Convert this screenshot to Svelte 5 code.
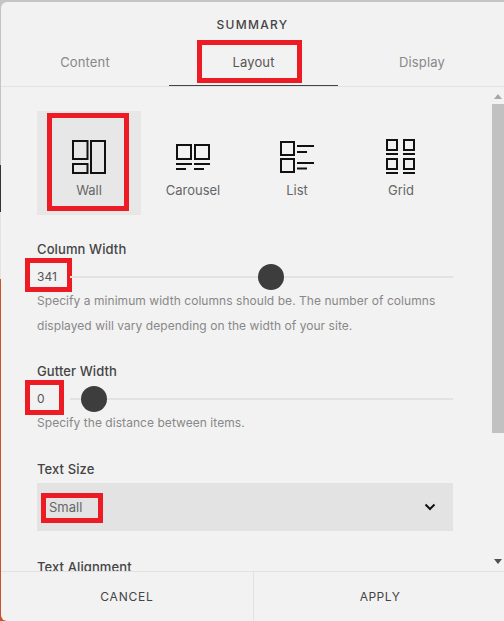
<script lang="ts">
    const tabs = ["Content", "Layout", "Display"];
    const layouts = ["Wall", "Carousel", "List", "Grid"];
</script>

<div class="page">
    <div class="modal">
        <header class="title">SUMMARY</header>

        <nav class="tabs">
            {#each tabs as tab}
                <div class="tab" class:active={tab === "Layout"}>
                    {#if tab === "Layout"}<span class="mark mark-tab"></span>{/if}
                    {tab}
                </div>
            {/each}
        </nav>

        <div class="body">
            <div class="scroll">
                <div class="layouts">
                    {#each layouts as item}
                        <div class="layout" class:selected={item === "Wall"}>
                            {#if item === "Wall"}<span class="mark mark-wall"></span>{/if}
                            <svg width="44" height="44" viewBox="0 0 44 44" fill="none" stroke="#111" stroke-width="2">
                                {#if item === "Wall"}
                                    <rect x="6" y="6" width="14.5" height="18" />
                                    <rect x="6" y="29" width="14.5" height="9" />
                                    <rect x="24" y="6" width="14" height="32" />
                                {:else if item === "Carousel"}
                                    <rect x="6" y="10" width="14" height="14" />
                                    <rect x="24" y="10" width="14" height="14" />
                                    <path d="M5 29h16M23 29h16M5 34h10M23 34h10" />
                                {:else if item === "List"}
                                    <rect x="6" y="7" width="13" height="13" />
                                    <rect x="6" y="24" width="13" height="13" />
                                    <path d="M22 11h17M22 17h10M22 28h17M22 33.500h10" />
                                {:else}
                                    <rect x="8" y="5" width="10" height="10" />
                                    <rect x="25" y="5" width="10" height="10" />
                                    <rect x="8" y="24" width="10" height="10" />
                                    <rect x="25" y="24" width="10" height="10" />
                                    <path d="M7 19h12M24 19h12M7 38h12M24 38h12" />
                                {/if}
                            </svg>
                            <span class="layout-name">{item}</span>
                        </div>
                    {/each}
                </div>

                <div class="field first">
                    <div class="label">Column Width</div>
                    <div class="slider">
                        <span class="mark mark-341"></span>
                        <span class="value">341</span>
                        <div class="track"><span class="thumb" style="left: 201px"></span></div>
                    </div>
                    <p class="desc">Specify a minimum width columns should be. The number of columns displayed will vary depending on the width of your site.</p>
                </div>

                <div class="field gutter">
                    <div class="label">Gutter Width</div>
                    <div class="slider">
                        <span class="mark mark-0"></span>
                        <span class="value">0</span>
                        <div class="track"><span class="thumb" style="left: 24px"></span></div>
                    </div>
                    <p class="desc">Specify the distance between items.</p>
                </div>

                <div class="field textsize">
                    <div class="label">Text Size</div>
                    <div class="select">
                        <span class="mark mark-small"></span>
                        <span>Small</span>
                        <svg width="12" height="8" viewBox="0 0 12 8" fill="none" stroke="#111" stroke-width="2"><path d="M1.500 1.500 6 6l4.500-4.500" /></svg>
                    </div>
                </div>

                <div class="field align">
                    <div class="label">Text Alignment</div>
                </div>
            </div>

            <div class="scrollbar">
                <span class="arrow up"></span>
                <span class="bar"></span>
                <span class="arrow down"></span>
            </div>
        </div>

        <footer class="footer">
            <button>CANCEL</button>
            <button>APPLY</button>
        </footer>
    </div>
</div>

<style>
    :global(body) {
        margin: 0;
    }

    .page {
        width: 504px;
        height: 621px;
        box-sizing: border-box;
        padding: 2px 0 0 1px;
        overflow: hidden;
        background: linear-gradient(to bottom, #c4c4c4 0, #c4c4c4 165px, #333 165px, #333 212px, #e4e4e4 212px, #e4e4e4 279px, #c9532a 279px);
        font-family: Inter, "Liberation Sans", sans-serif;
    }

    .modal {
        height: 100%;
        display: flex;
        flex-direction: column;
        background: #f2f2f2;
        border-radius: 6px 0 0 6px;
    }

    .title {
        height: 44px;
        padding-top: 15px;
        box-sizing: border-box;
        text-align: center;
        font-size: 12px;
        line-height: 16px;
        font-weight: 500;
        letter-spacing: 1.3px;
        color: #444;
    }

    .tabs {
        display: grid;
        grid-template-columns: 168px 169px 168px;
        height: 40px;
        border-bottom: 1px solid #e2e2e2;
    }

    .tab {
        position: relative;
        text-align: center;
        font-size: 13px;
        line-height: 32px;
        letter-spacing: 0.15px;
        color: #888;
    }

    .tab.active {
        color: #555;
        border-bottom: 1px solid #444;
    }

    .body {
        flex: 1;
        min-height: 0;
        display: flex;
    }

    .scroll {
        flex: 1;
        min-width: 0;
        overflow: hidden;
        padding: 24px 39px 0 36px;
    }

    .layouts {
        display: grid;
        grid-template-columns: repeat(4, 104px);
    }

    .layout {
        position: relative;
        height: 104px;
        display: flex;
        flex-direction: column;
        align-items: center;
        padding-top: 24px;
        box-sizing: border-box;
    }

    .layout.selected {
        background: #e7e7e7;
    }

    .layout-name {
        margin-top: 3px;
        font-size: 13px;
        line-height: 16px;
        color: #666;
    }

    .field.first {
        margin-top: 26px;
    }

    .field.gutter {
        margin-top: 25px;
    }

    .field.textsize {
        margin-top: 26px;
    }

    .field.align {
        margin-top: 28px;
    }

    .label {
        font-size: 13px;
        line-height: 16px;
        font-weight: 500;
        letter-spacing: 0.1px;
        color: #444;
    }

    .slider {
        position: relative;
        display: flex;
        align-items: center;
        height: 23px;
        margin-top: 8px;
    }

    .value {
        width: 33px;
        font-size: 12px;
        color: #555;
    }

    .track {
        position: relative;
        flex: 1;
        height: 2px;
        background: #e2e2e2;
    }

    .thumb {
        position: absolute;
        top: 1px;
        width: 26px;
        height: 26px;
        margin: -13px 0 0 -13px;
        border-radius: 50%;
        background: #3d3d3d;
    }

    .desc {
        margin: 0;
        font-size: 12px;
        line-height: 25px;
        letter-spacing: 0.05px;
        color: #888;
    }

    .select {
        position: relative;
        display: flex;
        align-items: center;
        justify-content: space-between;
        height: 48px;
        margin-top: 6px;
        padding: 0 17px 0 12px;
        background: #e3e3e3;
        font-size: 13px;
        color: #666;
    }

    .scrollbar {
        width: 12px;
        display: flex;
        flex-direction: column;
        align-items: center;
        padding-top: 7px;
    }

    .arrow {
        width: 0;
        height: 0;
        border-left: 4px solid transparent;
        border-right: 4px solid transparent;
    }

    .arrow.up {
        border-bottom: 5px solid #a8a8a8;
    }

    .arrow.down {
        margin-top: 126px;
        border-top: 5px solid #505050;
    }

    .bar {
        width: 12px;
        height: 329px;
        margin-top: 5px;
        background: #c1c1c1;
    }

    .footer {
        display: grid;
        grid-template-columns: 252px 1fr;
        height: 49px;
        border-top: 1px solid #e2e2e2;
    }

    .footer button {
        all: unset;
        text-align: center;
        font-size: 12px;
        letter-spacing: 0.8px;
        color: #444;
    }

    .footer button + button {
        padding-left: 2px;
        letter-spacing: 0.5px;
        border-left: 1px solid #e2e2e2;
    }

    /* red annotation boxes drawn on top of the screenshot */
    .mark {
        position: absolute;
        box-sizing: border-box;
        border: 5px solid #ed1c24;
    }

    .mark-tab {
        left: 28px;
        top: -6px;
        width: 105px;
        height: 43px;
    }

    .mark-wall {
        left: 10px;
        top: 2px;
        width: 82px;
        height: 98px;
    }

    .mark-341 {
        left: -12px;
        top: -7px;
        width: 47px;
        height: 34px;
    }

    .mark-0 {
        left: -12px;
        top: -7px;
        width: 39px;
        height: 35px;
    }

    .mark-small {
        left: 4px;
        top: 10px;
        width: 62px;
        height: 30px;
    }
</style>
